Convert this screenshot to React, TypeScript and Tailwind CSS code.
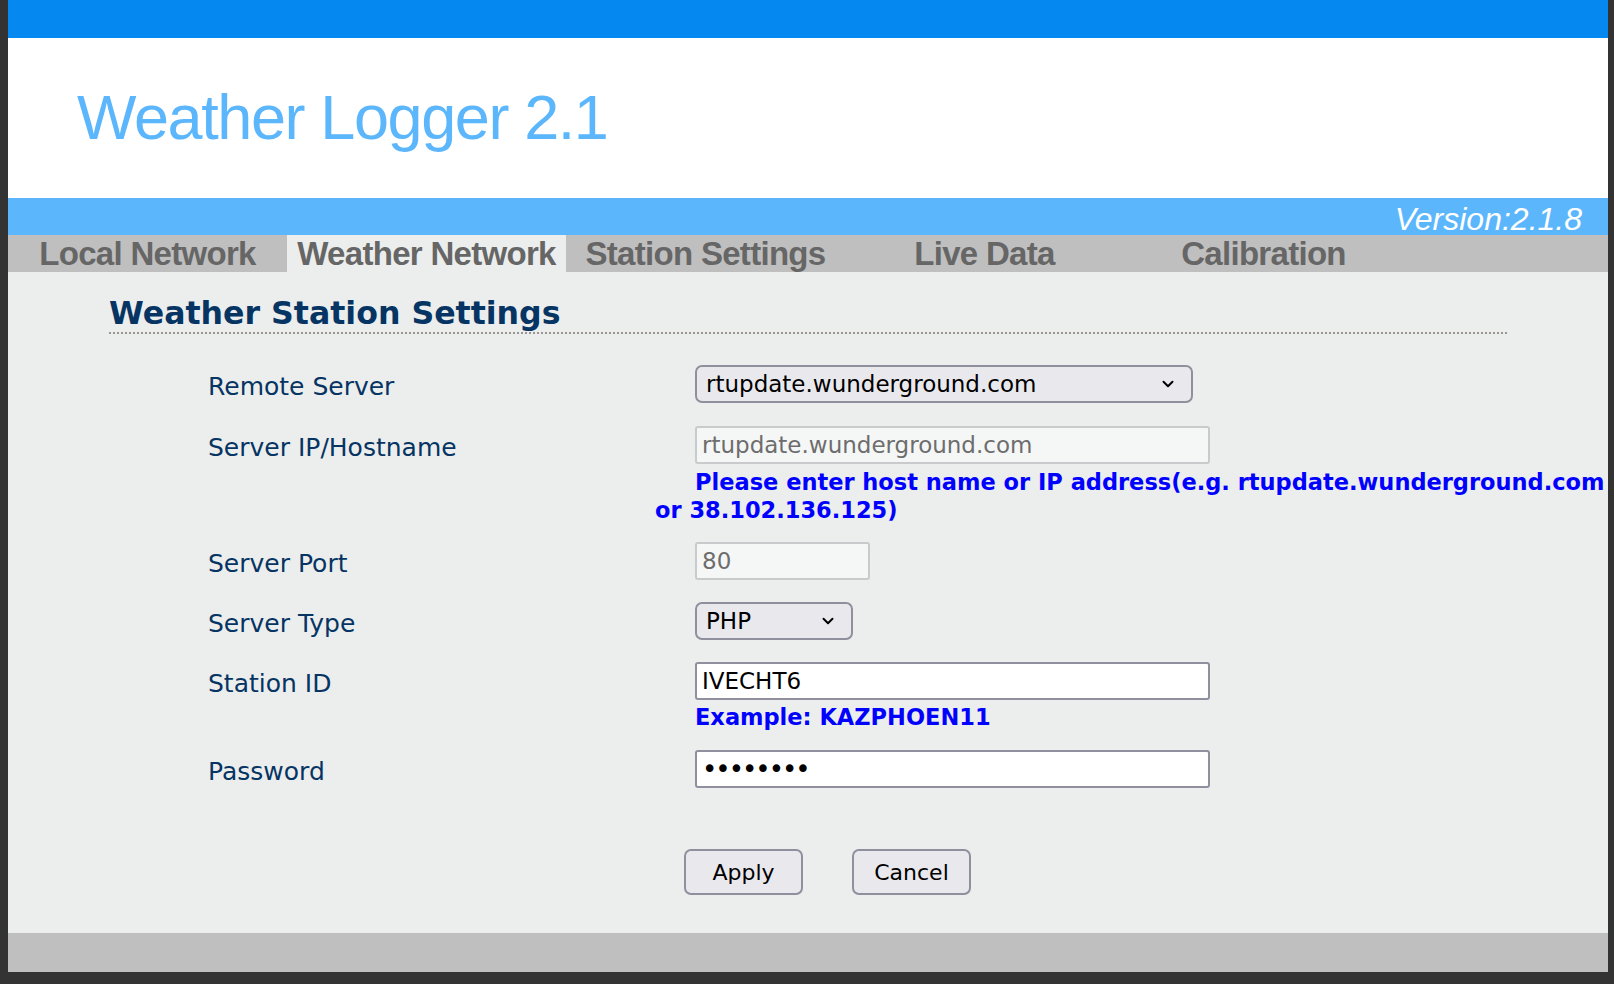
import { ChevronDown } from "lucide-react"

const tabs = ["Local Network", "Weather Network", "Station Settings", "Live Data", "Calibration"]

function Label({ children }: { children: React.ReactNode }) {
  return (
    <div className="w-[647px] shrink-0 h-[38px] flex items-center pl-[200px] pt-[6px] text-[25px] text-[#063463] font-['DejaVu_Sans',sans-serif] whitespace-nowrap">
      {children}
    </div>
  )
}

function FakeSelect({ value, width }: { value: string; width: string }) {
  return (
    <div
      className={`${width} ml-[40px] h-[38px] flex items-center justify-between rounded-[7px] border-2 border-[#8f8f9d] bg-[#e9e9ed] pl-[9px] pr-[14px] text-[23px] text-black font-['DejaVu_Sans',sans-serif]`}
    >
      <span>{value}</span>
      <ChevronDown size={18} strokeWidth={2.6} />
    </div>
  )
}

export default function App() {
  return (
    <div className="w-[1614px] h-[984px] bg-[#333333] pl-[8px] pr-[6px] pb-[12px] overflow-hidden">
      <div className="h-full flex flex-col bg-[#eceeed] overflow-hidden">
        <div className="h-[38px] bg-[#0589f1]" />
        <div className="h-[160px] bg-white pl-[69px] pt-[48px]">
          <h1 className="text-[63px] leading-none text-[#5cb6fc] font-['Liberation_Sans',Arial,sans-serif] tracking-[-1.4px]">
            Weather Logger 2.1
          </h1>
        </div>
        <div className="h-[37px] bg-[#5cb6fc] flex items-center justify-end pr-[26px]">
          <span className="text-[32px] leading-none italic text-white font-['Liberation_Sans',Arial,sans-serif] mt-[4px]">
            Version:2.1.8
          </span>
        </div>
        <div className="h-[37px] bg-[#bfbfbf] flex">
          {tabs.map((t, i) => (
            <div
              key={t}
              className={`w-[279px] flex items-center justify-center text-[33px] font-bold text-[#666666] tracking-[-0.7px] font-['Liberation_Sans',Arial,sans-serif] ${i === 1 ? "bg-[#eceeed]" : ""}`}
            >
              {t}
            </div>
          ))}
        </div>

        <div className="flex-1 flex flex-col">
          <div className="ml-[101px] w-[1398px] border-b-2 border-dotted border-[#9a9590] pt-[22px] pb-0">
            <h2 className="text-[31.6px] leading-[38px] font-bold text-[#063463] font-['DejaVu_Sans',sans-serif]">
              Weather Station Settings
            </h2>
          </div>

          <div className="flex flex-col pt-[31px] font-['DejaVu_Sans',sans-serif]">
            <div className="flex">
              <Label>Remote Server</Label>
              <FakeSelect value="rtupdate.wunderground.com" width="w-[498px]" />
            </div>

            <div className="flex mt-[23px]">
              <Label>Server IP/Hostname</Label>
              <div className="flex flex-col">
                <input
                  readOnly
                  disabled
                  value="rtupdate.wunderground.com"
                  className="ml-[40px] w-[515px] h-[38px] rounded-[3px] border-2 border-[#c9cacc] bg-[#f5f7f6] px-[5px] text-[23px] text-[#6d6d6d] font-['DejaVu_Sans',sans-serif]"
                />
                <p className="mt-[4px] text-[22.5px] leading-[28px] font-bold text-[#0000ff] whitespace-nowrap">
                  <span className="pl-[40px]">Please enter host name or IP address(e.g. rtupdate.wunderground.com</span>
                  <br />
                  or 38.102.136.125)
                </p>
              </div>
            </div>

            <div className="flex mt-[18px]">
              <Label>Server Port</Label>
              <input
                readOnly
                disabled
                value="80"
                className="ml-[40px] w-[175px] h-[38px] rounded-[3px] border-2 border-[#c9cacc] bg-[#f5f7f6] px-[5px] text-[23px] text-[#6d6d6d] font-['DejaVu_Sans',sans-serif]"
              />
            </div>

            <div className="flex mt-[22px]">
              <Label>Server Type</Label>
              <FakeSelect value="PHP" width="w-[158px]" />
            </div>

            <div className="flex mt-[22px]">
              <Label>Station ID</Label>
              <div className="flex flex-col">
                <input
                  readOnly
                  value="IVECHT6"
                  className="ml-[40px] w-[515px] h-[38px] rounded-[3px] border-2 border-[#8f8f9d] bg-white px-[5px] text-[23px] text-black font-['DejaVu_Sans',sans-serif] outline-none"
                />
                <p className="ml-[40px] mt-[3px] text-[22.5px] leading-[28px] font-bold text-[#0000ff]">
                  Example: KAZPHOEN11
                </p>
              </div>
            </div>

            <div className="flex mt-[19px]">
              <Label>Password</Label>
              <input
                readOnly
                type="password"
                value="abcdefgh"
                className="ml-[40px] w-[515px] h-[38px] rounded-[3px] border-2 border-[#8f8f9d] bg-white px-[5px] text-[26px] tracking-[-2px] text-black font-['DejaVu_Sans',sans-serif] outline-none"
              />
            </div>

            <div className="flex gap-[49px] ml-[676px] mt-[61px]">
              <button className="w-[119px] h-[46px] rounded-[7px] border-2 border-[#8f8f9d] bg-[#e9e9ed] text-[22px] text-black">
                Apply
              </button>
              <button className="w-[119px] h-[46px] rounded-[7px] border-2 border-[#8f8f9d] bg-[#e9e9ed] text-[22px] text-black">
                Cancel
              </button>
            </div>
          </div>
        </div>

        <div className="h-[39px] bg-[#bfbfbf]" />
      </div>
    </div>
  )
}
